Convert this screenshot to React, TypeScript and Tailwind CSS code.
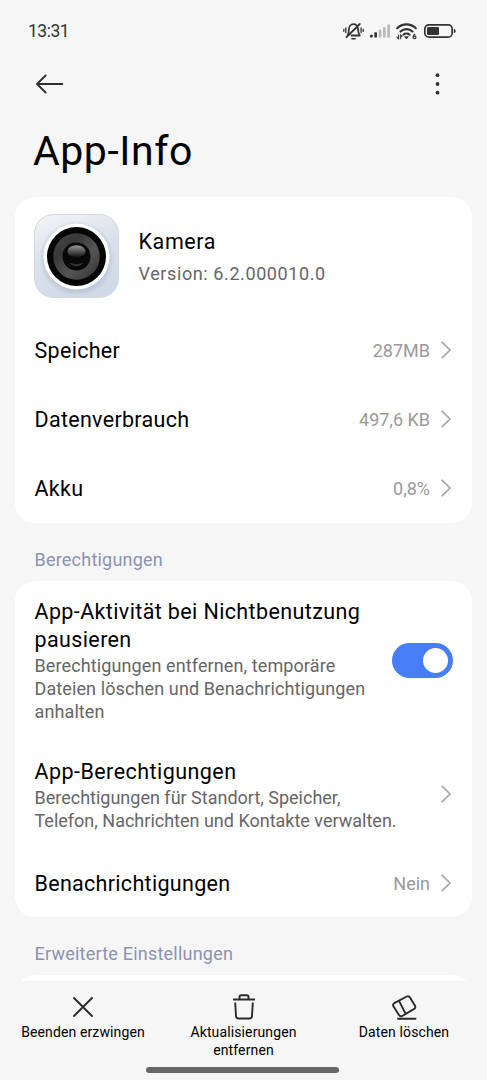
import type { ReactNode } from "react";

const StatusBar = () => (
  <div className="flex h-[62px] items-center justify-between pl-7 pr-[31px]">
    <span className="pt-px text-[17.5px] tracking-[-0.5px] text-[#333]">13:31</span>
    <div className="flex items-center text-[#333]">
      <svg className="mr-[6px]" width="21" height="18" viewBox="0 0 21 18" fill="none" stroke="currentColor" strokeWidth="1.8" strokeLinecap="round">
        <path d="M4.800 12.600c1-1 1-2.200 1-4.600 0-3.600 2-5.900 4.700-5.900 1.200 0 2.100.4 2.900 1M15 6.200c.3 3.300.2 5 1.500 6.600v.7H8.500M3.500 15.200 16.800 2" />
        <path d="M8.900 16.700h3.300" strokeWidth="1.500" />
        <path d="M2.800 6v4.500M.8 7.300v2M18.100 6v4.500M20.200 7.300v2" strokeWidth="1.300" />
      </svg>
      <svg className="mr-[6px]" width="20" height="14" viewBox="0 0 20 14" fill="currentColor">
        <rect x="0" y="10.700" width="2.700" height="2.800" rx=".6" />
        <rect x="4.300" y="8.300" width="2.700" height="5.200" rx=".6" />
        <g fill="#b9b9b9">
          <rect x="8.700" y="5.800" width="2.700" height="7.700" rx=".6" />
          <rect x="13" y="3.300" width="2.700" height="10.200" rx=".6" />
          <rect x="17.300" y="0.500" width="2.700" height="13" rx=".6" />
        </g>
      </svg>
      <svg className="mr-[7px]" width="21" height="18" viewBox="0 0 21 18" fill="none" stroke="currentColor" strokeLinecap="round">
        <path d="M1.200 6.200a13.200 13.200 0 0 1 18.600 0M4.500 9.600a8.600 8.600 0 0 1 12 0M7.400 12.700a4.600 4.600 0 0 1 6.200 0" strokeWidth="2.100" />
        <path d="m8.900 15 1.600 1.900 1.600-1.900z" fill="currentColor" strokeWidth="0.900" />
        <path d="M2.600 13v3.700l-1.600-1.600M4.700 16.700V13l1.200 1.400" strokeWidth="1.100" />
        <path d="M18.700 12.200l-1.400 2.200" strokeWidth="1.300" />
        <circle cx="18.500" cy="15.200" r="1.400" strokeWidth="1.300" />
      </svg>
      <svg width="32" height="14" viewBox="0 0 32 14" fill="none">
        <rect x=".85" y=".85" width="27.300" height="12.300" rx="4" stroke="currentColor" strokeWidth="1.700" />
        <rect x="3" y="3" width="12" height="8" rx="1.300" fill="currentColor" />
        <path d="M29.800 4.900c2.500 0 2.500 4.200 0 4.200z" fill="currentColor" />
      </svg>
    </div>
  </div>
);

const Chevron = () => (
  <svg className="mb-px shrink-0" width="12" height="20" viewBox="0 0 12 20" fill="none" stroke="#a5a5a5" strokeWidth="1.600">
    <path d="m1.700 1.900 8.300 8.100-8.300 8.100" />
  </svg>
);

const CameraIcon = () => (
  <svg width="85" height="84" viewBox="0 0 85 84">
    <defs>
      <linearGradient id="plate" x1="0" y1="0" x2="0.400" y2="1">
        <stop offset="0" stopColor="#f4f5f6" />
        <stop offset="0.500" stopColor="#dde3ec" />
        <stop offset="1" stopColor="#d0dae7" />
      </linearGradient>
      <linearGradient id="ring" x1="0" y1="0" x2="1" y2="1">
        <stop offset="0" stopColor="#484848" />
        <stop offset="0.300" stopColor="#383838" />
        <stop offset="0.600" stopColor="#555" />
        <stop offset="1" stopColor="#303030" />
      </linearGradient>
      <linearGradient id="glass" x1="0" y1="0" x2="0" y2="1">
        <stop offset="0" stopColor="#999" />
        <stop offset="1" stopColor="#101010" />
      </linearGradient>
      <radialGradient id="shade">
        <stop offset="0.800" stopColor="#8fa1b8" stopOpacity="0.400" />
        <stop offset="1" stopColor="#8fa1b8" stopOpacity="0" />
      </radialGradient>
    </defs>
    <rect x=".5" y=".5" width="84" height="83" rx="19" fill="url(#plate)" stroke="#d3d8df" />
    <circle cx="42.500" cy="44.500" r="38" fill="url(#shade)" />
    <circle cx="42.500" cy="42.500" r="33" fill="#fff" />
    <circle cx="42.500" cy="42.500" r="29.500" fill="#050505" />
    <circle cx="42.500" cy="42.500" r="23.200" fill="url(#ring)" />
    <circle cx="42.500" cy="42.500" r="14" fill="#080808" />
    <ellipse cx="42.500" cy="37.300" rx="9" ry="6" fill="url(#glass)" />
    <path d="M36.500 49.500q6 2.500 12 0-6 4.500-12 0z" fill="#444" stroke="#444" strokeWidth="0.600" />
  </svg>
);

const ValueRow = ({ label, value }: { label: string; value: string }) => (
  <div className="flex h-[69px] items-center pl-[19.500px] pr-5">
    <span className="grow pt-px text-[21.500px] tracking-[0.300px]">{label}</span>
    <span className="mr-[10px] text-[18px] text-[#999]">{value}</span>
    <Chevron />
  </div>
);

const SectionLabel = ({ children }: { children: ReactNode }) => (
  <h2 className="flex h-[58px] items-center pl-[34.500px] pt-[14px] text-[18px] tracking-[0.220px] text-[#8c93b0]">{children}</h2>
);

const Action = ({ icon, children }: { icon: ReactNode; children: ReactNode }) => (
  <button className="flex w-[160.500px] flex-col items-center text-center text-[14px] leading-[18px] tracking-[0.120px]">
    <span className="mb-[3px] flex h-[26px] items-center">{icon}</span>
    {children}
  </button>
);

export default function App() {
  return (
    <div className="flex h-[1080px] w-[487px] flex-col overflow-hidden bg-[#f6f6f6] font-['Roboto',sans-serif] text-black">
      <StatusBar />
      <header className="flex h-11 items-center justify-between pl-9 pr-[47px] text-[#303030]">
        <svg width="28" height="20" viewBox="0 0 28 20" fill="none" stroke="currentColor" strokeWidth="1.900" strokeLinecap="round" strokeLinejoin="round">
          <path d="M26.300 10H1M9.600 1.500 1 10l8.600 8.500" />
        </svg>
        <svg width="5" height="22" viewBox="0 0 5 22" fill="currentColor">
          <circle cx="2.500" cy="2.200" r="1.900" />
          <circle cx="2.500" cy="11" r="1.900" />
          <circle cx="2.500" cy="19.700" r="1.900" />
        </svg>
      </header>
      <h1 className="h-[91px] pl-[33px] pt-[18px] text-[41px] leading-[54px] tracking-[0.550px]">App-Info</h1>

      <main className="min-h-0 flex-1 overflow-hidden">
        <section className="mx-[15px] h-[326px] rounded-[20px] bg-white">
          <div className="flex h-[119px] pl-[19px] pt-[17px]">
            <CameraIcon />
            <div className="pl-[19.500px] pt-[14px]">
              <div className="text-[21.500px] leading-[28px] tracking-[0.600px]">Kamera</div>
              <div className="mt-[5px] text-[18px] leading-[26px] tracking-[0.600px] text-[#666]">Version: 6.2.000010.0</div>
            </div>
          </div>
          <ValueRow label="Speicher" value="287MB" />
          <ValueRow label="Datenverbrauch" value="497,6 KB" />
          <ValueRow label="Akku" value="0,8%" />
        </section>

        <SectionLabel>Berechtigungen</SectionLabel>
        <section className="mx-[15px] h-[336px] rounded-[20px] bg-white">
          <div className="flex h-[160px] items-center pb-[2px] pl-[19.500px] pr-[19px]">
            <div className="grow whitespace-nowrap">
              <div className="text-[21.500px] leading-[28px] tracking-[0.380px]">App-Aktivität bei Nichtbenutzung<br />pausieren</div>
              <div className="text-[18px] leading-[23px] tracking-[0.110px] text-[#666]">
                Berechtigungen entfernen, temporäre<br />Dateien löschen und Benachrichtigungen<br />anhalten
              </div>
            </div>
            <button role="switch" aria-checked="true" className="flex h-[35px] w-[61px] shrink-0 items-center justify-end rounded-full bg-[#477ef7] pr-[5px]">
              <span className="size-[25px] rounded-full bg-white" />
            </button>
          </div>
          <div className="flex h-[108px] items-center pb-px pl-[19.500px] pr-5">
            <div className="grow whitespace-nowrap">
              <div className="text-[21.500px] leading-[28px] tracking-[0.450px]">App-Berechtigungen</div>
              <div className="text-[18px] leading-[23px] tracking-normal text-[#666]">
                Berechtigungen für Standort, Speicher,<br />Telefon, Nachrichten und Kontakte verwalten.
              </div>
            </div>
            <Chevron />
          </div>
          <ValueRow label="Benachrichtigungen" value="Nein" />
        </section>

        <SectionLabel>Erweiterte Einstellungen</SectionLabel>
        <section className="mx-[15px] h-20 rounded-[20px] bg-white" />
      </main>

      <footer className="flex h-[99px] shrink-0 flex-col justify-between pb-[7px] pt-[13px]">
        <div className="flex justify-center">
          <Action
            icon={
              <svg width="20" height="20" viewBox="0 0 20 20" stroke="#2a2a2a" strokeWidth="1.900" strokeLinecap="round">
                <path d="m1 1 18 18M19 1 1 19" />
              </svg>
            }
          >
            Beenden erzwingen
          </Action>
          <Action
            icon={
              <svg width="24" height="26" viewBox="0 0 24 26" fill="none" stroke="#2a2a2a" strokeWidth="1.900" strokeLinejoin="round">
                <path d="M1 5.500h22M7.500 5.500V3q0-1.700 1.700-1.700h5.600q1.700 0 1.700 1.700v2.500M3.200 8.500 4 22q.2 2.500 2.500 2.500h11q2.300 0 2.500-2.500l.8-13.500" />
              </svg>
            }
          >
            Aktualisierungen
            <br />
            entfernen
          </Action>
          <Action
            icon={
              <svg width="25" height="25" viewBox="0 0 25 25" fill="none" stroke="#2a2a2a" strokeWidth="1.900" strokeLinejoin="round" strokeLinecap="round">
                <path d="M2.200 8.200 14.800 1.500q2-1 3.200.9l5 8.300q1 2-.8 3.200L10.200 21q-2 1-3.200-.9L1.400 11.300q-1-2 .8-3.100zM7.300 6.300l6.200 12.400M6 23.700h17.500" />
              </svg>
            }
          >
            Daten löschen
          </Action>
        </div>
        <div className="ml-[145.500px] h-[6px] w-[193px] rounded-full bg-[#666]" />
      </footer>
    </div>
  );
}
